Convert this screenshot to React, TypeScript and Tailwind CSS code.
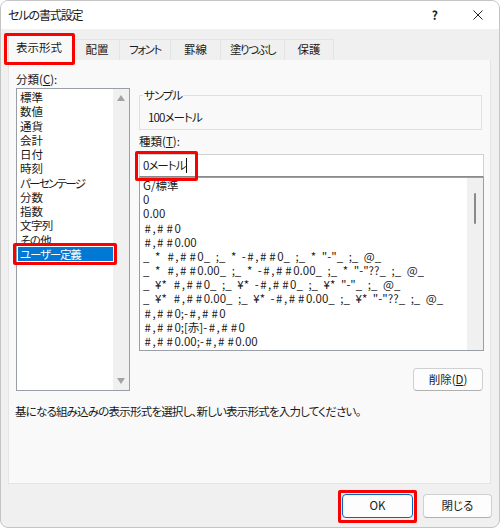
import React from "react";

const font = { fontFamily: '"Noto Sans CJK JP", "Noto Sans", sans-serif' };
const cats: [string, string][] = [
  ["標準", ""], ["数値", ""], ["通貨", ""], ["会計", ""], ["日付", ""], ["時刻", ""],
  ["パーセンテージ", "tracking-[-1.7px]"], ["分数", ""], ["指数", ""], ["文字列", "tracking-[-0.6px]"], ["その他", "tracking-[-0.6px]"],
];
const formats = [
  "G/標準",
  "0",
  "0.00",
  "#,##0",
  "#,##0.00",
  '_ * #,##0_ ;_ * -#,##0_ ;_ * "-"_ ;_ @_',
  '_ * #,##0.00_ ;_ * -#,##0.00_ ;_ * "-"??_ ;_ @_',
  '_ ¥* #,##0_ ;_ ¥* -#,##0_ ;_ ¥* "-"_ ;_ @_',
  '_ ¥* #,##0.00_ ;_ ¥* -#,##0.00_ ;_ ¥* "-"??_ ;_ @_',
  "#,##0;-#,##0",
  "#,##0;[赤]-#,##0",
  "#,##0.00;-#,##0.00",
];
const tabs: [string, string, string][] = [
  ["配置", "w-[45px]", ""],
  ["フォント", "w-[51px]", "tracking-[-1.5px]"],
  ["罫線", "w-[50px]", ""],
  ["塗りつぶし", "w-[64px]", "tracking-[-1.5px]"],
  ["保護", "w-[49px]", ""],
];

function Red({ className }: { className: string }) {
  return <div className={`absolute border-[3px] border-[#fa0000] rounded-[2px] pointer-events-none ${className}`} />;
}

function Fmt({ text }: { text: string }) {
  const parts = text.split("#");
  return (
    <>
      {parts.map((p, i) => (
        <React.Fragment key={i}>
          {i > 0 && <span className="px-[1.5px]">#</span>}
          {p}
        </React.Fragment>
      ))}
    </>
  );
}

export default function App() {
  return (
    <div style={font} className="relative w-[500px] h-[528px] overflow-hidden bg-white text-[11.5px] text-[#1a1a1a] [font-feature-settings:'palt']">
      <div className="relative flex flex-col w-[500px] h-[528px] bg-[#f0f0f0] border border-[#c4c4c4] rounded-[8px] overflow-hidden">
        <div className="flex items-center h-[28px] shrink-0 bg-white pl-[7px] pb-[1px] text-[12px]">
          <span className="tracking-[-1.1px]">セルの書式設定</span>
          <span className="ml-auto mr-[35px] font-bold text-[12px]">?</span>
          <svg width="10" height="10" viewBox="0 0 10 10" className="mr-[16px]">
            <path d="M0.5 0.5L9.5 9.5M9.5 0.5L0.5 9.5" stroke="#222" strokeWidth="1" fill="none" />
          </svg>
        </div>
        <div className="flex h-[31px] shrink-0 pl-[7px] items-end">
          <div className="w-[67px] h-[25px] flex items-center pl-[7px] bg-[#f9f9f9] border border-b-0 border-[#e2e2e2]">表示形式</div>
          {tabs.map(([t, w, s]) => (
            <div key={t} className={`${w} ${s} h-[21px] flex items-center justify-center bg-[#f0f0f0] border border-l-0 border-b-0 border-[#e4e4e4]`}>{t}</div>
          ))}
        </div>
        <div className="ml-[7px] w-[483px] h-[424px] shrink-0 bg-[#f9f9f9] border border-t-0 border-[#e4e4e4] pl-[7px] pr-[6px] pt-[11px] flex flex-col">
          <div className="flex gap-[9px] h-[320px]">
            <div className="w-[116px] flex flex-col">
              <div className="h-[17px] leading-[17px] shrink-0">分類(<u>C</u>):</div>
              <div className="h-[303px] flex bg-white border border-[#9a9ea6]">
                <div className="flex-1 pt-[1px] pl-[1px] leading-[14.25px]">
                  {cats.map(([c, s]) => (
                    <div key={c} className={`h-[14.25px] pl-[2px] whitespace-nowrap ${s}`}>{c}</div>
                  ))}
                  <div className="h-[14.25px] pl-[2px] bg-[#0078d4] text-white tracking-[-1.2px]">ユーザー定義</div>
                </div>
                <div className="w-[16px] bg-[#f0f0f0] flex flex-col items-center justify-between py-[6px]">
                  <svg width="8" height="6" viewBox="0 0 8 6"><path d="M4 0L8 6H0Z" fill="#a3a3a3" /></svg>
                  <svg width="8" height="6" viewBox="0 0 8 6"><path d="M4 6L8 0H0Z" fill="#a3a3a3" /></svg>
                </div>
              </div>
            </div>
            <div className="w-[345px] flex flex-col pt-[17px]">
              <fieldset className="h-[42px] w-[343px] shrink-0 border border-[#e0e0e0] pl-[8px]">
                <legend className="px-[1px] -ml-[5px] leading-[14px] tracking-[-1px]">サンプル</legend>
                <div className="pt-[7px] leading-[16px] tracking-[-0.9px]">100メートル</div>
              </fieldset>
              <div className="mt-[3px] mb-[4px] h-[17px] leading-[17px] shrink-0">種類(<u>T</u>):</div>
              <div className="h-[23px] w-[345px] shrink-0 flex items-center bg-white border border-[#d0d0d0] border-b-[#8a8a8a] pl-[3px] tracking-[-1px]">
                0メートル<span className="inline-block w-px h-[15px] bg-[#111] ml-[1px]" />
              </div>
              <div className="h-[174px] w-[345px] shrink-0 flex bg-white border border-[#9a9ea6] overflow-hidden">
                <div className="flex-1 pl-[3px] leading-[14.18px] overflow-hidden [word-spacing:3px]">
                  {formats.map((f) => (
                    <div key={f} className="h-[14.18px] whitespace-pre"><Fmt text={f} /></div>
                  ))}
                </div>
                <div className="w-[16px] bg-[#f0f0f0] flex justify-center pt-[15px]">
                  <div className="w-[2px] h-[31px] bg-[#8a8a8a] rounded-full" />
                </div>
              </div>
              <div className="mt-[17px] self-end mr-[1px] w-[70px] h-[23px] shrink-0 flex items-center justify-center bg-[#fdfdfd] border border-[#d0d0d0] border-b-[#b0b0b0] rounded-[4px]">削除(<u>D</u>)</div>
            </div>
          </div>
          <div className="mt-[12px] -ml-[1px] leading-[16px] tracking-[-0.8px]">基になる組み込みの表示形式を選択し、新しい表示形式を入力してください。</div>
        </div>
        <div className="flex justify-end gap-[10px] pr-[7px] pt-[10px]">
          <div className="w-[71px] h-[24px] flex items-center justify-center bg-[#fdfdfd] border border-[#0067c0] rounded-[4px]">OK</div>
          <div className="w-[69px] h-[24px] flex items-center justify-center bg-[#fdfdfd] border border-[#d0d0d0] border-b-[#b0b0b0] rounded-[4px]">閉じる</div>
        </div>
      </div>
      <Red className="left-[4px] top-[33px] w-[71px] h-[32px]" />
      <Red className="left-[135px] top-[151px] w-[63px] h-[30px]" />
      <Red className="left-[13px] top-[243px] w-[104px] h-[22px]" />
      <Red className="left-[338px] top-[490px] w-[79px] h-[33px]" />
    </div>
  );
}
